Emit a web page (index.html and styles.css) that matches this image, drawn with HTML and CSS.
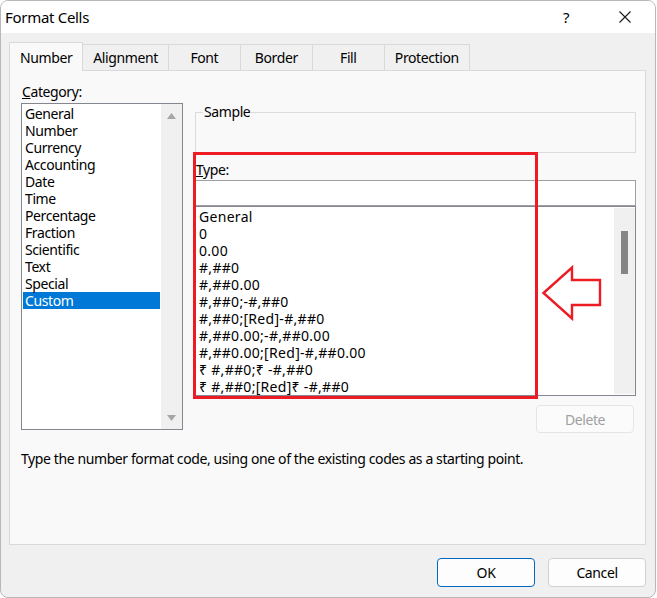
FILE: index.html
```html
<!DOCTYPE html>
<html lang="en">
<head>
<meta charset="utf-8">
<title>Format Cells</title>
<link rel="stylesheet" href="styles.css">
</head>
<body>
<div class="window">
  <div class="titlebar">
    <span class="title">Format Cells</span>
    <span class="tb-btn help">?</span>
    <span class="tb-btn close">
      <svg width="12" height="12" viewBox="0 0 12 12"><path d="M0.5 0.5 L11.5 11.5 M11.5 0.5 L0.5 11.5" stroke="#1a1a1a" stroke-width="1.1" fill="none"/></svg>
    </span>
  </div>
  <div class="tabs">
    <div class="tab active">Number</div>
    <div class="tab">Alignment</div>
    <div class="tab">Font</div>
    <div class="tab">Border</div>
    <div class="tab">Fill</div>
    <div class="tab">Protection</div>
  </div>
  <div class="panel">
    <div class="panel-top">
      <div class="cat-col">
        <div class="label"><u>C</u>ategory:</div>
        <div class="listbox cat-list">
          <div class="items">
            <div class="item">General</div>
            <div class="item">Number</div>
            <div class="item">Currency</div>
            <div class="item">Accounting</div>
            <div class="item">Date</div>
            <div class="item">Time</div>
            <div class="item">Percentage</div>
            <div class="item">Fraction</div>
            <div class="item">Scientific</div>
            <div class="item">Text</div>
            <div class="item">Special</div>
            <div class="item selected">Custom</div>
          </div>
          <div class="vscroll arrows">
            <svg width="9" height="6" viewBox="0 0 9 6"><path d="M0 6 L4.5 0 L9 6 Z" fill="#a6a6a6"/></svg>
            <svg width="9" height="6" viewBox="0 0 9 6"><path d="M0 0 L9 0 L4.5 6 Z" fill="#a6a6a6"/></svg>
          </div>
        </div>
      </div>
      <div class="type-col">
        <fieldset class="sample">
          <legend>Sample</legend>
          <div class="sample-body"></div>
        </fieldset>
        <div class="label type-label"><u>T</u>ype:</div>
        <div class="textbox"></div>
        <div class="listbox type-list">
          <div class="items">
            <div class="item">General</div>
            <div class="item">0</div>
            <div class="item">0.00</div>
            <div class="item">#,##0</div>
            <div class="item">#,##0.00</div>
            <div class="item">#,##0;-#,##0</div>
            <div class="item">#,##0;[Red]-#,##0</div>
            <div class="item">#,##0.00;-#,##0.00</div>
            <div class="item">#,##0.00;[Red]-#,##0.00</div>
            <div class="item">₹ #,##0;₹ -#,##0</div>
            <div class="item">₹ #,##0;[Red]₹ -#,##0</div>
          </div>
          <div class="vscroll">
            <div class="thumb"></div>
          </div>
        </div>
        <div class="delete-row">
          <button class="btn disabled">Delete</button>
        </div>
        <div class="highlight-rect"></div>
        <svg class="callout-arrow" width="62" height="56" viewBox="0 0 62 56">
          <path d="M2.5 28 L31 2.5 L31 15 L59 15 L59 40 L31 40 L31 53.5 Z" fill="none" stroke="#ed1c24" stroke-width="2.4" stroke-linejoin="miter"/>
        </svg>
      </div>
    </div>
    <p class="desc">Type the number format code, using one of the existing codes as a starting point.</p>
  </div>
  <div class="footer">
    <button class="btn primary">OK</button>
    <button class="btn">Cancel</button>
  </div>
</div>
</body>
</html>
```

FILE: styles.css
```css
* { box-sizing: border-box; }

body {
  margin: 0;
  background: #ffffff;
  font-family: "Segoe UI", "Noto Sans", sans-serif;
  font-size: 14px;
  letter-spacing: -0.4px;
  color: #000;
}

.window {
  width: 656px;
  height: 598px;
  border: 1px solid #b8b8b8;
  border-radius: 8px;
  overflow: hidden;
  background: #f0f0f0;
  display: flex;
  flex-direction: column;
}

.titlebar {
  height: 32px;
  flex: none;
  background: #ffffff;
  display: flex;
  align-items: center;
  padding-left: 4px;
}

.title {
  flex: 1;
  font-size: 15px;
  letter-spacing: -0.3px;
}

.tb-btn {
  width: 46px;
  height: 32px;
  display: flex;
  align-items: center;
  justify-content: center;
}

.help {
  font-size: 15px;
  margin-right: 13px;
}

.close {
  margin-right: 7px;
}

.tabs {
  display: flex;
  align-items: flex-end;
  padding: 9px 0 0 8px;
  flex: none;
}

.tab {
  height: 26px;
  min-width: 73px;
  padding: 0 10px;
  border: 1px solid #d9d9d9;
  border-bottom: none;
  margin-left: -1px;
  display: flex;
  align-items: center;
  justify-content: center;
  background: #f0f0f0;
}

.tab:first-child { margin-left: 0; }

.tab.active {
  height: 29px;
  min-width: 74px;
  padding: 0 10px;
  margin-bottom: -1px;
  background: #f9f9f9;
  position: relative;
  z-index: 1;
}

.panel {
  width: 637px;
  height: 475px;
  margin-left: 8px;
  flex: none;
  border: 1px solid #d9d9d9;
  background: #f9f9f9;
  padding: 11px 9px 0 11px;
}

.panel-top {
  display: flex;
  gap: 12px;
  align-items: flex-start;
}

.label {
  line-height: 19px;
  height: 19px;
  padding-left: 1px;
}

.cat-col {
  width: 162px;
}

.cat-col .label {
  margin-bottom: 2px;
}

.listbox {
  background: #ffffff;
  border: 1px solid #828790;
  display: flex;
}

.items {
  flex: 1;
  padding: 1px 1px 0 1px;
}

.item {
  height: 17px;
  line-height: 17px;
  padding-left: 2px;
  white-space: nowrap;
}

.item.selected {
  background: #0078d7;
  color: #ffffff;
}

.cat-list {
  height: 327px;
}

.cat-list .items {
  padding-top: 1px;
}

.vscroll {
  width: 21px;
  background: #f0f0f0;
  flex: none;
}

.vscroll.arrows {
  display: flex;
  flex-direction: column;
  align-items: center;
  justify-content: space-between;
  padding: 9px 0 8px 0;
}

.type-col {
  width: 441px;
  position: relative;
}

.sample {
  margin: 22px 0 0 0;
  padding: 0;
  border: 1px solid #dcdcdc;
}

.sample legend {
  margin-left: 7px;
  padding: 0 1px;
  line-height: 16px;
}

.sample-body {
  height: 32px;
}

.type-label {
  margin-top: 7px;
  margin-bottom: 1px;
}

.textbox {
  height: 26px;
  background: #ffffff;
  border: 1px solid #a0a0a0;
}

.type-list {
  height: 190px;
}

.type-list .items {
  padding: 1px 0 0 1px;
}

.type-list .item {
  letter-spacing: 0.3px;
}

.type-list .vscroll {
  margin: 1px 0 1px 0;
  padding: 23px 0 0 7px;
}

.thumb {
  width: 7px;
  height: 43px;
  background: #858585;
}

.delete-row {
  display: flex;
  justify-content: flex-end;
  padding-right: 2px;
  margin-top: 9px;
}

.btn {
  font-family: inherit;
  font-size: 14px;
  letter-spacing: -0.4px;
  width: 98px;
  height: 29px;
  background: #fdfdfd;
  border: 1px solid #d0d0d0;
  border-radius: 4px;
  color: #000;
  padding: 0;
}

.btn.disabled {
  height: 28px;
  background: #fbfbfb;
  border-color: #e5e5e5;
  color: #a0a0a0;
}

.btn.primary {
  border-color: #0067c0;
}

.highlight-rect {
  position: absolute;
  left: -2px;
  top: 70px;
  width: 345px;
  height: 247px;
  border: 3px solid #ed1c24;
  pointer-events: none;
}

.callout-arrow {
  position: absolute;
  left: 346px;
  top: 183px;
}

.desc {
  margin: 17px 0 0 0;
  line-height: 17px;
}

.footer {
  display: flex;
  justify-content: flex-end;
  gap: 13px;
  padding: 13px 9px 0 0;
}
```
